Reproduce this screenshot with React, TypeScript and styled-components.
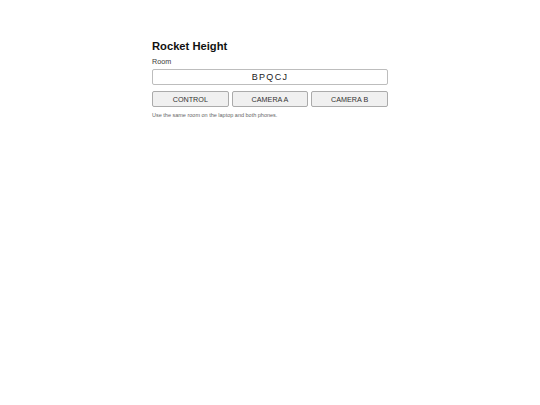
import styled, { createGlobalStyle } from "styled-components";

const GlobalStyle = createGlobalStyle`
  html, body {
    margin: 0;
    padding: 0;
    background: #ffffff;
  }
  body {
    font-family: "Liberation Sans", Arial, sans-serif;
    color: #111;
  }
`;

function App() {
  return (
    <>
      <GlobalStyle />
      <Page>
        <Title>Rocket Height</Title>
        <Label htmlFor="room">Room</Label>
        <RoomInput id="room" defaultValue="BPQCJ" readOnly />
        <ButtonRow>
          <RoleButton>CONTROL</RoleButton>
          <RoleButton>CAMERA A</RoleButton>
          <RoleButton>CAMERA B</RoleButton>
        </ButtonRow>
        <Hint>Use the same room on the laptop and both phones.</Hint>
      </Page>
    </>
  );
}

const Page = styled.main`
  width: 236px;
  margin: 0 auto;
  padding-top: 40px;
  display: flex;
  flex-direction: column;
`;

const Title = styled.h1`
  margin: 0;
  font-size: 11.2px;
  line-height: 13px;
  font-weight: 700;
  color: #111;
`;

const Label = styled.label`
  margin-top: 5px;
  font-size: 7.2px;
  line-height: 8px;
  color: #3a3a3a;
`;

const RoomInput = styled.input`
  box-sizing: border-box;
  margin-top: 3px;
  width: 100%;
  height: 16px;
  padding: 0 4px;
  border: 1px solid #bdbdbd;
  border-radius: 2px;
  background: #fff;
  font-family: "Liberation Sans", Arial, sans-serif;
  font-size: 9px;
  letter-spacing: 1.3px;
  text-align: center;
  color: #1a1a1a;
  outline: none;
`;

const ButtonRow = styled.div`
  margin-top: 6px;
  display: grid;
  grid-template-columns: repeat(3, 1fr);
  gap: 3px;
`;

const RoleButton = styled.button`
  box-sizing: border-box;
  height: 16px;
  padding: 0;
  border: 1px solid #ababab;
  border-radius: 2px;
  background: #f0f0f0;
  font-family: "Liberation Sans", Arial, sans-serif;
  font-size: 7.2px;
  font-weight: 400;
  color: #333;
  cursor: pointer;
`;

const Hint = styled.p`
  margin: 4.5px 0 0;
  font-size: 5.5px;
  line-height: 7px;
  color: #666;
`;

export default App;
